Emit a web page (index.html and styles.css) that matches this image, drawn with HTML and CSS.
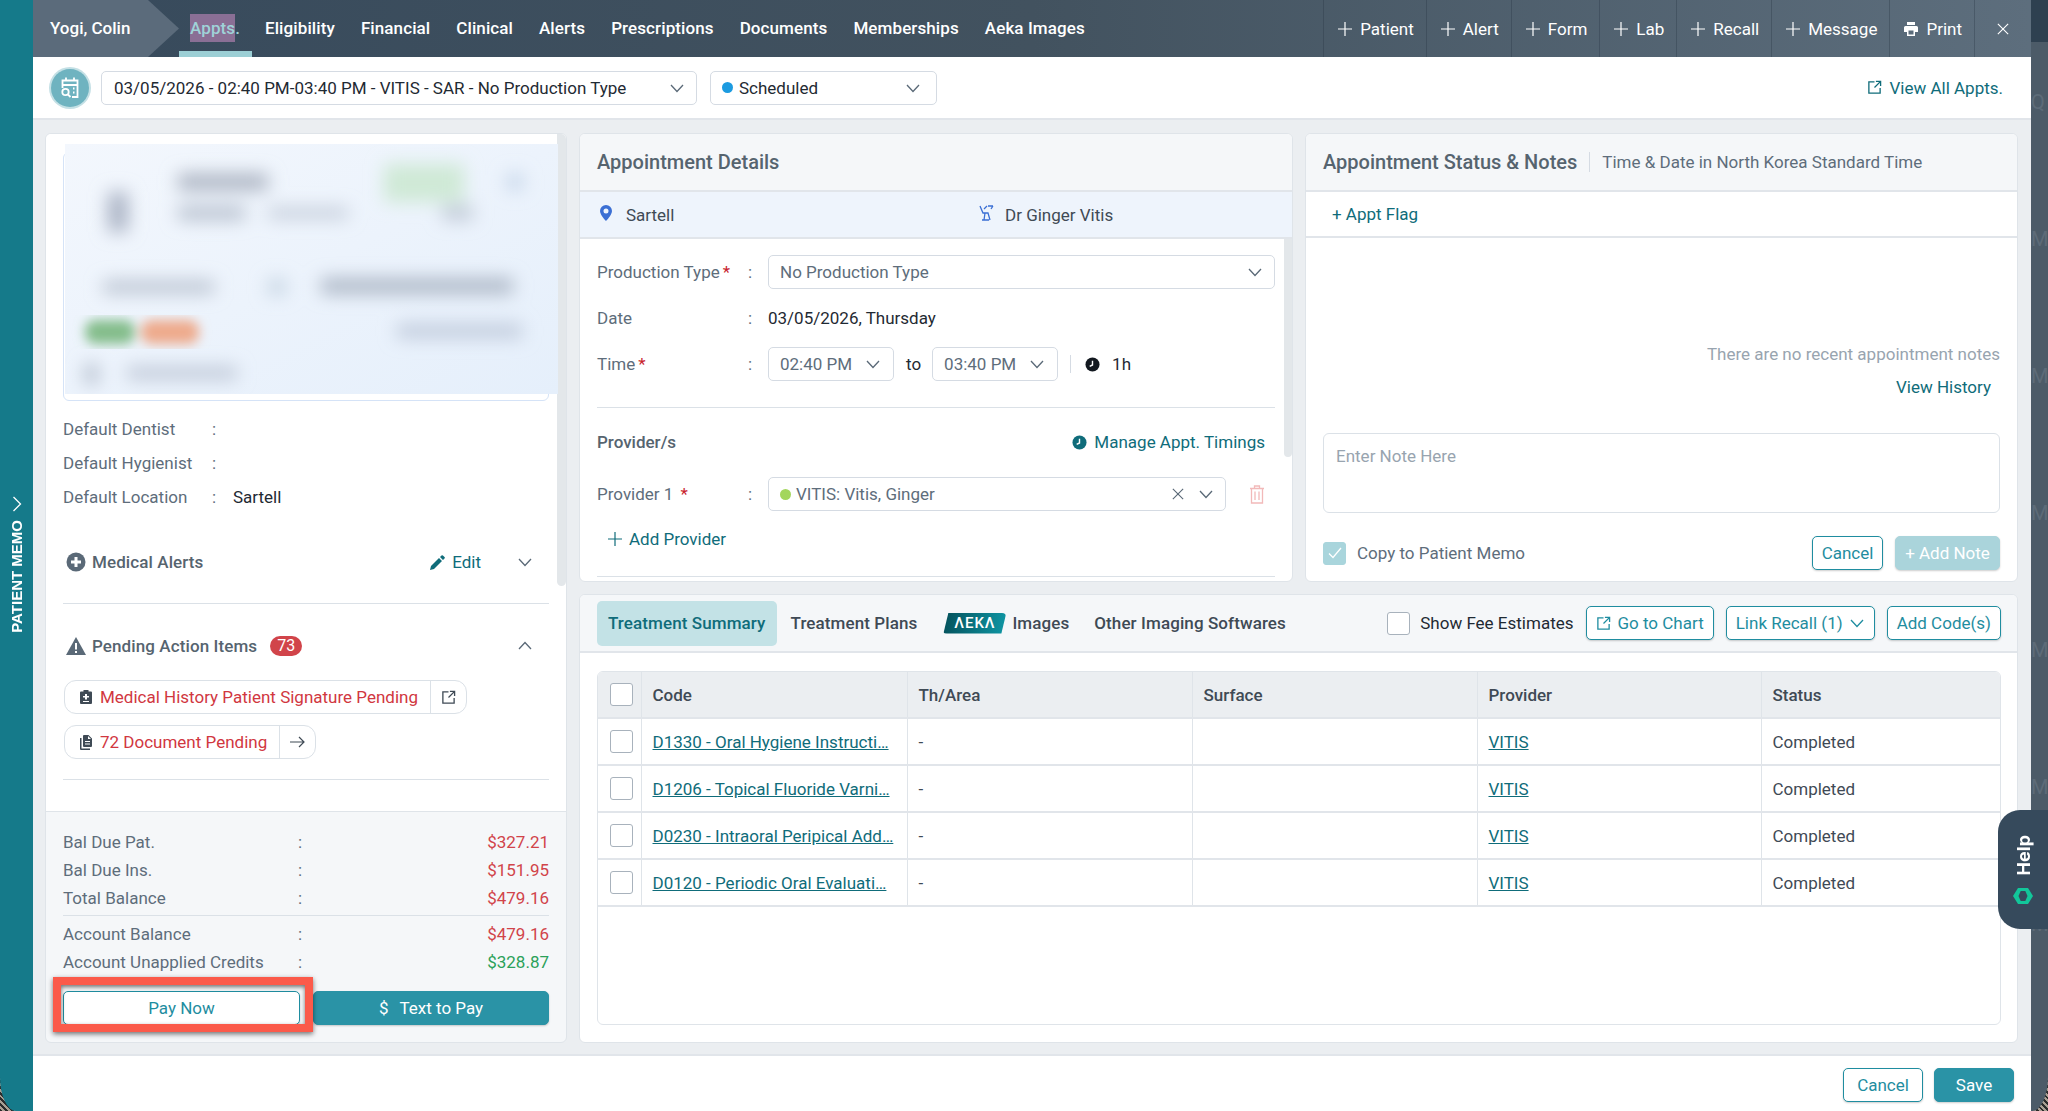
FILE: index.html
```html
<!DOCTYPE html>
<html lang="en">
<head>
    <meta charset="UTF-8">
    <meta name="viewport" content="width=device-width, initial-scale=1.0">
    <title>Appointment - Yogi, Colin</title>
    <link rel="stylesheet" href="styles.css">
</head>
<body>
    <svg class="sprite" aria-hidden="true">
        <symbol id="i-chev" viewBox="0 0 16 16"><path d="M2 5l6 6.5L14 5" fill="none" stroke="currentColor" stroke-width="1.3"/></symbol>
        <symbol id="i-up" viewBox="0 0 16 16"><path d="M2 11l6-6.5L14 11" fill="none" stroke="currentColor" stroke-width="1.3"/></symbol>
        <symbol id="i-plus" viewBox="0 0 14 14"><path d="M7 0v14M0 7h14" fill="none" stroke="currentColor" stroke-width="1.2"/></symbol>
        <symbol id="i-x" viewBox="0 0 14 14"><path d="M1 1l12 12M13 1L1 13" fill="none" stroke="currentColor" stroke-width="1.3"/></symbol>
        <symbol id="i-ext" viewBox="0 0 16 16"><path d="M8 2H2v12h12V8.500M9.500 1.500h5v5M14.500 1.500L8 8" fill="none" stroke="currentColor" stroke-width="1.4"/></symbol>
        <symbol id="i-clock" viewBox="0 0 16 16"><circle cx="8" cy="8" r="7.500" fill="currentColor"/><path d="M8 4v4.500l-3 1.500" fill="none" stroke="#fff" stroke-width="1.500"/></symbol>
    </svg>

    <aside class="memo-rail">
        <svg class="memo-chev" viewBox="0 0 10 16"><path d="M1.500 1l7 7-7 7" fill="none" stroke="#fff" stroke-width="1.300"/></svg>
        <span class="memo-label">PATIENT MEMO</span>
    </aside>

    <div class="modal">
        <header class="topbar">
            <div class="patient-name">Yogi, Colin</div>
            <nav class="tabs">
                <a class="tab active"><mark>Appts</mark>.</a>
                <a class="tab">Eligibility</a>
                <a class="tab">Financial</a>
                <a class="tab">Clinical</a>
                <a class="tab">Alerts</a>
                <a class="tab">Prescriptions</a>
                <a class="tab">Documents</a>
                <a class="tab">Memberships</a>
                <a class="tab">Aeka Images</a>
            </nav>
            <div class="actions">
                <a class="action"><svg class="ic14"><use href="#i-plus"/></svg>Patient</a>
                <a class="action"><svg class="ic14"><use href="#i-plus"/></svg>Alert</a>
                <a class="action"><svg class="ic14"><use href="#i-plus"/></svg>Form</a>
                <a class="action"><svg class="ic14"><use href="#i-plus"/></svg>Lab</a>
                <a class="action"><svg class="ic14"><use href="#i-plus"/></svg>Recall</a>
                <a class="action"><svg class="ic14"><use href="#i-plus"/></svg>Message</a>
                <a class="action"><svg class="ic14" viewBox="0 0 14 14"><path d="M3 0h8v3H3zM1.500 4h11A1.500 1.500 0 0 1 14 5.500V10h-3v4H3v-4H0V5.500A1.500 1.500 0 0 1 1.500 4zM4.500 8.500v4h5v-4z" fill="#fff" fill-rule="evenodd"/></svg>Print</a>
                <a class="action close"><svg class="ic12"><use href="#i-x"/></svg></a>
            </div>
        </header>

        <div class="subbar">
            <div class="appt-badge">
                <svg viewBox="0 0 24 24" width="24" height="24"><path d="M8 1.500v4M16 1.500v4M4.500 12V4.500h15V21H14M4.500 9h15" fill="none" stroke="#fff" stroke-width="1.800"/><circle cx="7.500" cy="16" r="3.200" fill="none" stroke="#fff" stroke-width="1.800"/><path d="M10 18.500l2.500 2.500M15 12.500h1.500M15 16.500h1.500" stroke="#fff" stroke-width="1.800"/></svg>
            </div>
            <div class="select appt-select"><span>03/05/2026 - 02:40 PM-03:40 PM - VITIS - SAR - No Production Type</span><svg class="ic16"><use href="#i-chev"/></svg></div>
            <div class="select status-select"><span class="status-dot"></span><span class="grow">Scheduled</span><svg class="ic16"><use href="#i-chev"/></svg></div>
            <a class="link view-all"><svg class="ic15"><use href="#i-ext"/></svg>View All Appts.</a>
        </div>

        <main class="content">
            <section class="panel left-panel">
                <div class="left-scroll">
                    <div class="scroll-thumb"></div>
                    <div class="patient-card">
                        <svg class="patient-blur" width="493" height="250" viewBox="0 0 493 250">
                            <defs>
                                <linearGradient id="card-bg" x1="0" y1="0" x2="1" y2="1"><stop offset="0" stop-color="#f3f7fd"/><stop offset="1" stop-color="#e5effb"/></linearGradient>
                                <filter id="soft" x="-20%" y="-20%" width="140%" height="140%"><feGaussianBlur stdDeviation="9"/></filter>
                                <filter id="soft-pill" x="-20%" y="-20%" width="140%" height="140%"><feGaussianBlur stdDeviation="6"/></filter>
                            </defs>
                            <rect width="493" height="250" fill="url(#card-bg)"/>
                            <g filter="url(#soft)">
                                <rect x="43" y="48" width="20" height="40" fill="#aab3c4"/>
                                <rect x="113" y="30" width="90" height="16" fill="#a9b1bf"/>
                                <rect x="319" y="20" width="80" height="38" fill="#cfe9d6"/>
                                <rect x="442" y="30" width="16" height="16" fill="#c4d4e8"/>
                                <rect x="113" y="62" width="67" height="14" fill="#b6bfcd"/>
                                <rect x="203" y="64" width="80" height="10" fill="#bfc8d6"/>
                                <rect x="377" y="62" width="31" height="14" fill="#bfc8d6"/>
                                <rect x="38" y="137" width="111" height="12" fill="#b6bfcd"/>
                                <rect x="203" y="135" width="18" height="16" fill="#c6d4e2"/>
                                <rect x="256" y="134" width="192" height="16" fill="#adb7c6"/>
                                <rect x="332" y="180" width="125" height="14" fill="#c0cadb"/>
                                <rect x="20" y="220" width="13" height="20" fill="#b2bccb"/>
                                <rect x="62" y="223" width="110" height="12" fill="#bcc5d4"/>
                            </g>
                            <g filter="url(#soft-pill)">
                                <rect x="20" y="176" width="50" height="24" rx="10" fill="#84bd8b"/>
                                <rect x="76" y="176" width="58" height="24" rx="10" fill="#eeaa8c"/>
                            </g>
                        </svg>
                    </div>

                    <dl class="defaults">
                        <div class="default-row"><dt>Default Dentist</dt><dd>:</dd></div>
                        <div class="default-row"><dt>Default Hygienist</dt><dd>:</dd></div>
                        <div class="default-row"><dt>Default Location</dt><dd>:</dd><dd class="value">Sartell</dd></div>
                    </dl>

                    <div class="side-head alerts-head">
                        <svg class="side-ic" viewBox="0 0 20 20"><circle cx="10" cy="10" r="9.500" fill="#5a6977"/><path d="M10 5v10M5 10h10" stroke="#fff" stroke-width="3"/></svg>
                        <h4>Medical Alerts</h4>
                        <a class="link edit"><svg width="15" height="15" viewBox="0 0 15 15"><path d="M0 15l1-4 8-8 3 3-8 8zM10 2l1.500-1.500a1 1 0 0 1 1.400 0l1.600 1.600a1 1 0 0 1 0 1.400L13 5z" fill="#0f6c7a"/></svg>Edit</a>
                        <svg class="ic16 side-chev"><use href="#i-chev"/></svg>
                    </div>
                    <hr class="rule rule-alerts">
                    <div class="side-head pending-head">
                        <svg class="side-ic" viewBox="0 0 20 18"><path d="M10 0l10 18H0z" fill="#5a6977"/><path d="M10 6v6.500M10 14v2" stroke="#fff" stroke-width="2"/></svg>
                        <h4>Pending Action Items</h4>
                        <span class="count">73</span>
                        <svg class="ic16 side-chev"><use href="#i-up"/></svg>
                    </div>
                    <div class="chip chip-first">
                        <svg width="12" height="14" viewBox="0 0 12 14"><path d="M3.500 0h5v1.500H11a1 1 0 0 1 1 1V13a1 1 0 0 1-1 1H1a1 1 0 0 1-1-1V2.500a1 1 0 0 1 1-1h2.500zM5 4v2H3v1.500h2v2h2v-2h2V6H7V4zM3 11v1h6v-1z" fill="#3f4a55" fill-rule="evenodd"/></svg>
                        <span class="chip-text">Medical History Patient Signature Pending</span>
                        <span class="chip-go"><svg class="ic15"><use href="#i-ext"/></svg></span>
                    </div>
                    <div class="chip">
                        <svg width="12" height="15" viewBox="0 0 12 15"><path d="M4 0h4.500L12 3.500V11a1 1 0 0 1-1 1H4a1 1 0 0 1-1-1V1a1 1 0 0 1 1-1zM8 1v3h3zM0 3h1.500v10.500H10V15H1a1 1 0 0 1-1-1zM5 6v1h5V6zM5 8.500v1h5v-1z" fill="#3f4a55" fill-rule="evenodd"/></svg>
                        <span class="chip-text">72 Document Pending</span>
                        <span class="chip-go"><svg width="15" height="12" viewBox="0 0 15 12"><path d="M0 6h14M9 1l5 5-5 5" fill="none" stroke="#3f4a55" stroke-width="1.200"/></svg></span>
                    </div>
                    <hr class="rule rule-pending">
                    <div class="side-head next-head">
                        <svg class="side-ic" viewBox="0 0 20 20"><circle cx="10" cy="10" r="9.500" fill="#5a6977"/></svg>
                    </div>
                </div>

                <div class="balance">
                    <div class="bal-row"><span>Bal Due Pat.</span><span>:</span><b class="due">$327.21</b></div>
                    <div class="bal-row"><span>Bal Due Ins.</span><span>:</span><b class="due">$151.95</b></div>
                    <div class="bal-row"><span>Total Balance</span><span>:</span><b class="due">$479.16</b></div>
                    <hr class="rule rule-bal">
                    <div class="bal-row"><span>Account Balance</span><span>:</span><b class="due">$479.16</b></div>
                    <div class="bal-row"><span>Account Unapplied Credits</span><span>:</span><b class="credit">$328.87</b></div>
                    <div class="pay-btns">
                        <div class="pay-wrap">
                            <button class="btn btn-outline btn-pay">Pay Now</button>
                            <div class="callout"></div>
                        </div>
                        <button class="btn btn-fill btn-pay"><span class="dollar">$</span>Text to Pay</button>
                    </div>
                </div>
            </section>

            <section class="panel details-panel">
                <div class="panel-head"><h3>Appointment Details</h3></div>
                <div class="place-band">
                    <div class="place">
                        <svg width="12" height="16" viewBox="0 0 12 16"><path d="M6 0a6 6 0 0 1 6 6c0 4-6 10-6 10S0 10 0 6a6 6 0 0 1 6-6zm0 3.500a2.500 2.500 0 1 0 0 5 2.500 2.500 0 0 0 0-5z" fill="#3b6fd4" fill-rule="evenodd"/></svg>
                        <span>Sartell</span>
                    </div>
                    <div class="place doctor">
                        <svg width="15" height="16" viewBox="0 0 15 16"><path d="M1 1l3 7h5l2 7M6 8l-1 7M3 15h7M9 1h5M14 1l-2 3M5 4l3-3" fill="none" stroke="#3b6fd4" stroke-width="1.300"/></svg>
                        <span>Dr Ginger Vitis</span>
                    </div>
                </div>
                <div class="details-body">
                    <div class="scroll-thumb thumb-details"></div>
                    <div class="form-row">
                        <label>Production Type<i>*</i></label><span>:</span>
                        <div class="select"><span class="grow">No Production Type</span><svg class="ic16"><use href="#i-chev"/></svg></div>
                    </div>
                    <div class="form-row">
                        <label>Date</label><span>:</span>
                        <span class="plain">03/05/2026, Thursday</span>
                    </div>
                    <div class="form-row">
                        <label>Time<i>*</i></label><span>:</span>
                        <div class="time-line">
                            <div class="select time-select"><span class="grow">02:40 PM</span><svg class="ic16"><use href="#i-chev"/></svg></div>
                            <span class="plain">to</span>
                            <div class="select time-select"><span class="grow">03:40 PM</span><svg class="ic16"><use href="#i-chev"/></svg></div>
                            <span class="time-sep"></span>
                            <svg class="ic15 clock-dark"><use href="#i-clock"/></svg>
                            <span class="plain">1h</span>
                        </div>
                    </div>
                    <hr class="rule rule-time">
                    <div class="provider-head">
                        <h5>Provider/s</h5>
                        <a class="link"><svg class="ic15"><use href="#i-clock"/></svg>Manage Appt. Timings</a>
                    </div>
                    <div class="form-row provider-row">
                        <label>Provider 1 <i>*</i></label><span>:</span>
                        <div class="provider-line">
                            <div class="select grow">
                                <span class="provider-dot"></span>
                                <span class="grow">VITIS: Vitis, Ginger</span>
                                <svg class="ic12 muted-x"><use href="#i-x"/></svg>
                                <svg class="ic16"><use href="#i-chev"/></svg>
                            </div>
                            <svg class="trash" width="14" height="19" viewBox="0 0 14 19"><path d="M0 3.500h14M4.500 3.500V1h5v2.500M1.500 3.500V18h11V3.500M5 6.500V15M9 6.500V15" fill="none" stroke="#f2b9b9" stroke-width="1.300"/></svg>
                        </div>
                    </div>
                    <a class="link add-provider"><svg class="ic14"><use href="#i-plus"/></svg>Add Provider</a>
                    <hr class="rule rule-provider">
                </div>
            </section>

            <section class="panel notes-panel">
                <div class="panel-head">
                    <h3>Appointment Status &amp; Notes</h3>
                    <span class="head-note">Time &amp; Date in North Korea Standard Time</span>
                </div>
                <div class="flag-row"><a class="link">+ Appt Flag</a></div>
                <div class="notes-body">
                    <p class="no-notes">There are no recent appointment notes</p>
                    <a class="link view-history">View History</a>
                    <div class="note-box">Enter Note Here</div>
                    <div class="note-actions">
                        <span class="check checked"><svg width="14" height="12" viewBox="0 0 14 12"><path d="M1 6.500l4 4L13 1" fill="none" stroke="#fff" stroke-width="1.300"/></svg></span>
                        <span class="copy-label">Copy to Patient Memo</span>
                        <button class="btn btn-outline btn-cancel">Cancel</button>
                        <button class="btn btn-soft">+ Add Note</button>
                    </div>
                </div>
            </section>

            <section class="panel treatment-panel">
                <div class="treatment-bar">
                    <a class="t-tab active">Treatment Summary</a>
                    <a class="t-tab">Treatment Plans</a>
                    <a class="t-tab images-tab"><span class="aeka">ΛEKΛ</span>Images</a>
                    <a class="t-tab">Other Imaging Softwares</a>
                    <span class="check fee-check"></span>
                    <span class="fee-label">Show Fee Estimates</span>
                    <button class="btn btn-outline btn-bar"><svg class="ic15"><use href="#i-ext"/></svg>Go to Chart</button>
                    <button class="btn btn-outline btn-bar">Link Recall (1)<svg class="ic16"><use href="#i-chev"/></svg></button>
                    <button class="btn btn-outline btn-bar">Add Code(s)</button>
                </div>
                <div class="table-wrap">
                    <table class="codes">
                        <thead>
                            <tr><th><span class="check"></span></th><th>Code</th><th>Th/Area</th><th>Surface</th><th>Provider</th><th>Status</th></tr>
                        </thead>
                        <tbody>
                            <tr><td><span class="check"></span></td><td><a class="code-link">D1330 - Oral Hygiene Instructi…</a></td><td>-</td><td></td><td><a class="prov-link">VITIS</a></td><td>Completed</td></tr>
                            <tr><td><span class="check"></span></td><td><a class="code-link">D1206 - Topical Fluoride Varni…</a></td><td>-</td><td></td><td><a class="prov-link">VITIS</a></td><td>Completed</td></tr>
                            <tr><td><span class="check"></span></td><td><a class="code-link">D0230 - Intraoral Peripical Add…</a></td><td>-</td><td></td><td><a class="prov-link">VITIS</a></td><td>Completed</td></tr>
                            <tr><td><span class="check"></span></td><td><a class="code-link">D0120 - Periodic Oral Evaluati…</a></td><td>-</td><td></td><td><a class="prov-link">VITIS</a></td><td>Completed</td></tr>
                        </tbody>
                    </table>
                </div>
            </section>
        </main>

        <footer class="modal-foot">
            <button class="btn btn-outline btn-foot">Cancel</button>
            <button class="btn btn-fill btn-foot">Save</button>
        </footer>
    </div>

    <div class="backdrop">
        <div class="backdrop-top"></div>
        <div class="backdrop-letters">
            <span>Q</span><span>M</span><span>M</span><span>M</span><span>M</span><span>M</span><span>M</span>
        </div>
    </div>

    <div class="help-tab">
        <span>Help</span>
        <svg width="20" height="16" viewBox="0 0 20 16"><path d="M5 0h4L5.500 8 9 16H5L0 8zM15 0h-4l3.500 8L11 16h4l5-8z" fill="#12c79a"/><path d="M5 0h10l-2 3H7zM5 16h10l-2-3H7z" fill="#12c79a"/></svg>
    </div>
</body>
</html>
```

FILE: styles.css
```css
* {
    box-sizing: border-box;
}
html, body {
    height: 100%;
}
body {
    margin: 0;
    display: flex;
    height: 1111px;
    overflow: hidden;
    font-family: Roboto, "Liberation Sans", sans-serif;
    font-size: 17px;
    color: #1f2a33;
    background: repeating-linear-gradient(45deg, #2b2b2b 0 2px, #a89e92 2px 4px);
}
a {
    text-decoration: none;
}
h3, h4, h5, p, dl, dd {
    margin: 0;
}
.sprite {
    display: none;
}
.ic12 { width: 12px; height: 12px; flex: none; }
.ic14 { width: 14px; height: 14px; flex: none; }
.ic15 { width: 15px; height: 15px; flex: none; }
.ic16 { width: 16px; height: 16px; flex: none; }
.grow { flex: 1; min-width: 0; }
.link {
    display: inline-flex;
    align-items: center;
    gap: 7px;
    color: #0f6c7a;
}

/* left rail */
.memo-rail {
    width: 33px;
    flex: none;
    padding-top: 496px;
    display: flex;
    flex-direction: column;
    align-items: center;
    gap: 8px;
    background: #157a8a;
    border-bottom-left-radius: 16px 34px;
}
.memo-chev {
    width: 10px;
    height: 16px;
}
.memo-label {
    writing-mode: vertical-rl;
    transform: rotate(180deg);
    font-family: "Liberation Sans", sans-serif;
    font-weight: 700;
    font-size: 15px;
    color: #fff;
}

/* modal */
.modal {
    width: 1998px;
    flex: none;
    display: flex;
    flex-direction: column;
    background: #fff;
}
.topbar {
    height: 57px;
    flex: none;
    display: flex;
    color: #fff;
    background: linear-gradient(90deg, #374a5c 0%, #42525f 50%, #5d6e7d 100%);
}
.patient-name {
    width: 146px;
    flex: none;
    padding: 0 0 0 17px;
    line-height: 57px;
    font-weight: 500;
    background: #5b6b7b;
    clip-path: polygon(0 0, 115px 0, 146px 50%, 115px 100%, 0 100%);
}
.tabs {
    display: flex;
}
.tab {
    position: relative;
    padding: 0 13px;
    line-height: 57px;
    font-weight: 500;
    letter-spacing: 0.1px;
    color: #fff;
}
.tab.active {
    padding: 0 12px 0 11px;
    color: #9fd3d8;
}
.tab.active::after {
    content: "";
    position: absolute;
    left: 0;
    right: 0;
    bottom: 0;
    height: 6px;
    background: #9ccfd5;
}
.tab mark {
    color: inherit;
    padding: 4px 0;
    background: #8a6f95;
}
.actions {
    margin-left: auto;
    display: flex;
}
.action {
    display: flex;
    align-items: center;
    gap: 8px;
    padding: 0 12px 0 14px;
    color: #fff;
    border-left: 1px solid rgba(40, 55, 70, 0.35);
}
.action.close {
    width: 57px;
    justify-content: center;
    padding: 0;
}

.subbar {
    height: 63px;
    flex: none;
    display: flex;
    align-items: center;
    padding: 0 28px 0 17px;
    border-bottom: 2px solid #e1e5ea;
}
.appt-badge {
    width: 38px;
    height: 38px;
    margin: 0 12px 0 1px;
    display: flex;
    align-items: center;
    justify-content: center;
    border-radius: 50%;
    background: #6fb3c0;
    box-shadow: 0 0 0 2px #c4e0e5;
}
.select {
    height: 34px;
    display: flex;
    align-items: center;
    padding: 0 11px;
    background: #fff;
    border: 1px solid #d5dbe3;
    border-radius: 5px;
    white-space: nowrap;
}
.select svg {
    color: #5a6977;
}
.appt-select {
    width: 596px;
    justify-content: space-between;
    margin-right: 13px;
    padding-left: 12px;
}
.status-select {
    width: 227px;
    padding-right: 15px;
}
.status-dot {
    width: 11px;
    height: 11px;
    margin-right: 6px;
    border-radius: 50%;
    background: #1c9be0;
}
.view-all {
    margin-left: auto;
}

/* grid of panels */
.content {
    height: 936px;
    flex: none;
    display: grid;
    grid-template-columns: 522px 714px 713px;
    grid-template-rows: 449px 449px;
    gap: 12px;
    padding: 13px 13px 11px 12px;
    background: #ebeef1;
    border-bottom: 2px solid #e1e5ea;
}
.panel {
    display: flex;
    flex-direction: column;
    min-height: 0;
    overflow: hidden;
    background: #fff;
    border: 1px solid #dfe4e9;
    border-radius: 6px;
}
.panel-head {
    height: 58px;
    flex: none;
    display: flex;
    align-items: center;
    padding: 0 17px;
    background: #f5f7f9;
    border-bottom: 2px solid #e1e5ea;
}
.panel-head h3 {
    font-size: 20px;
    font-weight: 500;
    color: #56646f;
}
.rule {
    height: 1px;
    margin: 0;
    border: none;
    background: #dbe1e7;
}
.scroll-thumb {
    position: absolute;
    top: 0;
    right: 0;
    width: 9px;
    height: 452px;
    border-radius: 0 0 5px 5px;
    background: #e3e7ea;
}

/* left panel */
.left-panel {
    grid-row: 1 / 3;
    background: #f5f7f9;
}
.left-scroll {
    position: relative;
    height: 678px;
    flex: none;
    overflow: hidden;
    padding: 18px 17px 0;
    background: #fff;
    border-bottom: 1px solid #dfe4e9;
}
.patient-card {
    position: relative;
    height: 249px;
    border: 1px solid #d5e3f7;
    border-radius: 6px;
}
.patient-blur {
    position: absolute;
    top: -9px;
    left: 1px;
    display: block;
}
.defaults {
    margin-top: 11px;
    color: #5e6d7b;
}
.default-row {
    height: 34px;
    display: flex;
    align-items: center;
}
.default-row dt {
    width: 149px;
}
.default-row dd {
    width: 21px;
}
.default-row .value {
    width: auto;
    color: #1f2a33;
}
.side-head {
    height: 34px;
    display: flex;
    align-items: center;
    color: #56646f;
}
.side-head h4 {
    margin-left: 6px;
    font-size: 17px;
    font-weight: 500;
    letter-spacing: 0.1px;
}
.side-ic {
    width: 20px;
    height: 20px;
    margin-left: 3px;
    flex: none;
}
.side-chev {
    margin: 0 16px 0 0;
    color: #5a6977;
}
.alerts-head {
    margin-top: 31px;
}
.edit {
    margin: 0 36px 0 auto;
}
.rule-alerts {
    margin-top: 24px;
}
.pending-head {
    margin-top: 25px;
}
.pending-head .side-chev {
    margin-left: auto;
}
.count {
    margin-left: 13px;
    padding: 0 7px;
    line-height: 20px;
    font-size: 16px;
    color: #fff;
    background: #d1444a;
    border-radius: 10px;
}
.chip {
    width: fit-content;
    height: 34px;
    margin: 11px 0 0 1px;
    display: flex;
    align-items: center;
    padding-left: 15px;
    background: #fff;
    border: 1px solid #dbe1e7;
    border-radius: 12px;
}
.chip-first {
    margin-top: 17px;
}
.chip-text {
    margin: 0 12px 0 8px;
    color: #d1373f;
}
.chip-go {
    width: 36px;
    height: 100%;
    display: flex;
    align-items: center;
    justify-content: center;
    color: #3f4a55;
    border-left: 1px solid #dbe1e7;
}
.rule-pending {
    margin-top: 20px;
}
.next-head {
    margin-top: 31px;
    align-items: flex-start;
}
.balance {
    flex: 1;
    padding: 16px 17px 0;
    color: #5e6d7b;
}
.bal-row {
    height: 28px;
    display: grid;
    grid-template-columns: 235px 1fr auto;
    align-items: center;
}
.bal-row b {
    font-weight: 400;
}
.due {
    color: #d1444a;
}
.credit {
    color: #2ba15a;
}
.rule-bal {
    margin: 3px 0 4px;
}
.pay-btns {
    margin-top: 15px;
    display: flex;
    gap: 13px;
}
.pay-wrap {
    position: relative;
    width: 237px;
    flex: none;
}
.btn {
    height: 34px;
    font: inherit;
    border-radius: 5px;
    white-space: nowrap;
    box-shadow: 0 1px 2px rgba(0, 0, 0, 0.2);
}
.btn-outline {
    color: #1f8da0;
    background: #fff;
    border: 1px solid #1f8da0;
}
.btn-fill {
    color: #fff;
    background: #2a93a6;
    border: 1px solid #2a93a6;
}
.btn-soft {
    width: 105px;
    margin-left: 12px;
    color: #fff;
    background: #aad4db;
    border: 1px solid #aad4db;
}
.btn-pay {
    width: 100%;
}
.dollar {
    margin-right: 11px;
}
/* red box someone drew on the screenshot */
.callout {
    position: absolute;
    top: -14px;
    left: -10px;
    right: -13px;
    bottom: -7px;
    border: 8px solid #fb5a4a;
    box-shadow: 0 2px 5px rgba(0, 0, 0, 0.55), inset 0 2px 4px rgba(0, 0, 0, 0.55);
}

/* appointment details */
.place-band {
    height: 47px;
    flex: none;
    display: flex;
    align-items: center;
    padding-left: 20px;
    color: #3f4a55;
    background: #eef4fc;
    border-bottom: 2px solid #e1e5ea;
}
.place {
    width: 379px;
    flex: none;
    display: flex;
    align-items: center;
    gap: 14px;
}
.place svg {
    margin-top: -4px;
}
.place.doctor {
    gap: 11px;
}
.details-body {
    position: relative;
    flex: 1;
    min-height: 0;
    padding: 16px 17px 0 17px;
}
.thumb-details {
    width: 8px;
    height: 218px;
}
.form-row {
    min-height: 34px;
    margin-bottom: 12px;
    display: grid;
    grid-template-columns: 151px 20px 1fr;
    align-items: center;
    color: #5e6d7b;
}
.form-row label i {
    margin-left: 3px;
    font-style: normal;
    color: #c8232c;
}
.plain {
    color: #1f2a33;
}
.time-line,
.provider-line {
    display: flex;
    align-items: center;
}
.time-select {
    width: 126px;
    padding-right: 12px;
}
.time-line .plain:nth-child(2) {
    margin: 0 11px 0 12px;
}
.time-sep {
    width: 1px;
    height: 18px;
    margin: 0 14px 0 12px;
    background: #d5dbe3;
}
.clock-dark {
    margin-right: 12px;
    color: #12181f;
}
.rule-time {
    margin-top: 26px;
}
.provider-head {
    height: 34px;
    margin-top: 17px;
    display: flex;
    align-items: center;
    justify-content: space-between;
    padding-right: 10px;
}
.provider-head h5 {
    font-size: 17px;
    font-weight: 500;
    color: #56646f;
}
.provider-row {
    margin-top: 18px;
    margin-bottom: 0;
}
.provider-dot {
    width: 11px;
    height: 11px;
    margin-right: 5px;
    border-radius: 50%;
    background: #a3d65c;
}
.muted-x {
    margin-right: 14px;
    color: #5a6977;
}
.trash {
    margin: 0 11px 0 24px;
    flex: none;
}
.add-provider {
    margin: 16px 0 0 11px;
    height: 24px;
}
.rule-provider {
    margin-top: 25px;
}

/* notes */
.head-note {
    margin-left: 12px;
    padding-left: 12px;
    color: #5e6d7b;
    border-left: 1px solid #d5dbe3;
}
.flag-row {
    height: 46px;
    flex: none;
    display: flex;
    align-items: center;
    padding-left: 26px;
    border-bottom: 2px solid #e1e5ea;
}
.notes-body {
    flex: 1;
    display: flex;
    flex-direction: column;
    padding: 104px 17px 0;
}
.no-notes {
    line-height: 24px;
    text-align: right;
    color: #98a4af;
}
.view-history {
    align-self: flex-end;
    margin: 9px 9px 0 0;
    line-height: 24px;
}
.note-box {
    height: 80px;
    margin-top: 34px;
    padding: 12px;
    color: #98a4af;
    border: 1px solid #dbe1e7;
    border-radius: 6px;
}
.note-actions {
    margin-top: 23px;
    display: flex;
    align-items: center;
}
.check {
    width: 23px;
    height: 23px;
    flex: none;
    display: inline-flex;
    align-items: center;
    justify-content: center;
    vertical-align: middle;
    background: #fff;
    border: 1px solid #a8b2bc;
    border-radius: 3px;
}
.check.checked {
    background: #a9d5dc;
    border-color: #a9d5dc;
}
.copy-label {
    margin-left: 11px;
    color: #5e6d7b;
}
.btn-cancel {
    width: 71px;
    margin-left: auto;
}

/* treatment */
.treatment-panel {
    grid-column: 2 / 4;
}
.treatment-bar {
    height: 58px;
    flex: none;
    display: flex;
    align-items: center;
    padding: 0 16px 0 17px;
    background: #f5f7f9;
    border-bottom: 2px solid #e1e5ea;
}
.t-tab {
    height: 45px;
    display: flex;
    align-items: center;
    padding: 0 11px;
    margin-right: 3px;
    font-weight: 500;
    letter-spacing: 0.1px;
    color: #3f4a55;
    border-radius: 5px;
}
.t-tab.active {
    color: #0f6c7a;
    background: #c3e2e6;
}
.images-tab {
    padding-left: 12px;
}
.aeka {
    width: 63px;
    height: 21px;
    margin-right: 6px;
    font-size: 15px;
    line-height: 21px;
    text-align: center;
    letter-spacing: 1px;
    color: #fff;
    background: linear-gradient(100deg, #04505a, #0f97a5);
    clip-path: polygon(8% 0, 100% 0, 92% 100%, 0 100%);
    border-radius: 4px;
}
.fee-check {
    margin-left: auto;
}
.fee-label {
    margin: 0 13px 0 10px;
}
.btn-bar {
    display: inline-flex;
    align-items: center;
    gap: 6px;
    height: 34px;
    padding: 0 9px;
    margin-left: 12px;
}
.btn-bar:first-of-type {
    margin-left: 0;
}
.table-wrap {
    height: 354px;
    margin: 18px 16px 0 17px;
    overflow: hidden;
    border: 1px solid #dfe4e9;
    border-radius: 6px;
}
.codes {
    width: 100%;
    table-layout: fixed;
    border-collapse: collapse;
}
.codes th:nth-child(1) { width: 43px; }
.codes th:nth-child(2) { width: 266px; }
.codes th:nth-child(3) { width: 285px; }
.codes th:nth-child(4) { width: 285px; }
.codes th:nth-child(5) { width: 284px; }
.codes th,
.codes td {
    height: 47px;
    padding: 0 11px;
    text-align: left;
    color: #3f4a55;
    border-right: 1px solid #dfe4e9;
    border-bottom: 2px solid #e1e5ea;
}
.codes th:last-child,
.codes td:last-child {
    border-right: none;
}
.codes th {
    height: 46px;
    font-weight: 500;
    background: #ebeef1;
}
.codes th:first-child,
.codes td:first-child {
    padding: 0 0 0 12px;
}
.code-link {
    white-space: nowrap;
    color: #0f6c7a;
    text-decoration: underline;
}
.prov-link {
    color: #0f6c7a;
    text-decoration: underline;
}

.modal-foot {
    flex: 1;
    display: flex;
    justify-content: flex-end;
    align-items: flex-start;
    gap: 11px;
    padding: 12px 17px 0 0;
}
.btn-foot {
    width: 80px;
}

/* page behind the modal */
.backdrop {
    flex: 1;
    overflow: hidden;
    background: #4c5b68;
    border-bottom-right-radius: 16px 34px;
}
.backdrop-top {
    height: 42px;
    background: #2e4050;
}
.backdrop-letters {
    display: flex;
    flex-direction: column;
    color: #5d6b78;
}
.backdrop-letters span {
    height: 137px;
    line-height: 137px;
    font-size: 20px;
    margin-top: -8px;
}
.backdrop-letters span + span {
    margin-top: 0;
}
.help-tab {
    position: absolute;
    top: 810px;
    right: 0;
    width: 50px;
    height: 119px;
    display: flex;
    flex-direction: column;
    align-items: center;
    justify-content: center;
    gap: 13px;
    color: #fff;
    background: #364a5c;
    border-radius: 22px 0 0 22px;
}
.help-tab span {
    writing-mode: vertical-rl;
    transform: rotate(180deg);
    font-family: Inter, sans-serif;
    font-weight: 700;
    font-size: 18px;
}
```
